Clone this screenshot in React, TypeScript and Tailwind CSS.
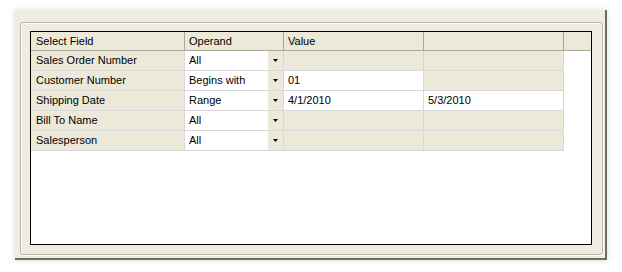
type Row = {
  field: string;
  operand: string;
  value?: string;
  value2?: string;
  valueOn: boolean;
  value2On: boolean;
};

const rows: Row[] = [
  { field: 'Sales Order Number', operand: 'All', valueOn: false, value2On: false },
  { field: 'Customer Number', operand: 'Begins with', value: '01', valueOn: true, value2On: false },
  { field: 'Shipping Date', operand: 'Range', value: '4/1/2010', value2: '5/3/2010', valueOn: true, value2On: true },
  { field: 'Bill To Name', operand: 'All', valueOn: false, value2On: false },
  { field: 'Salesperson', operand: 'All', valueOn: false, value2On: false },
];

function DropArrow() {
  return (
    <svg width="5" height="3" viewBox="0 0 5 3">
      <path d="M0 0h5L2.5 3z" fill="#000" />
    </svg>
  );
}

export default function App() {
  return (
    <div className="w-[622px] h-[272px] bg-white pt-[10px] pl-[15px]" style={{ fontFamily: '"Liberation Sans", Arial, sans-serif' }}>
      <div className="w-[592px] h-[250px] bg-[#efece1] border-r-2 border-b-2 border-[#6f6d66] shadow-[0_0_6px_rgba(120,110,80,0.25)] pt-[12px] pl-[5px]">
        <div className="w-[583px] h-[233px] rounded-[3px] border border-[#b8b5a6] shadow-[inset_1px_1px_0_#fff,1px_1px_0_#fff] pt-[8px] pl-[9px]">
          <div className="w-[562px] h-[214px] bg-white border border-black text-[11px] text-black">
            {/* header */}
            <div className="flex h-[19px] bg-[#ece9d8] border-b border-[#aca899]">
              <div className="w-[154px] pl-[5px] flex items-center border-r border-[#aca899]">Select Field</div>
              <div className="w-[99px] pl-[4px] flex items-center border-r border-[#aca899]">Operand</div>
              <div className="w-[140px] pl-[4px] flex items-center border-r border-[#aca899]">Value</div>
              <div className="w-[140px] border-r border-[#aca899]" />
              <div className="flex-1" />
            </div>
            {rows.map((r) => (
              <div key={r.field} className="flex h-[20px]">
                <div className="w-[154px] pl-[5px] flex items-center bg-[#ece9d8] border-r border-b border-[#d8d8dc]">{r.field}</div>
                <div className="w-[99px] flex border-r border-b border-[#d8d8dc]">
                  <div className="flex-1 pl-[4px] flex items-center bg-white">{r.operand}</div>
                  <div className="w-[16px] flex items-center justify-center bg-[#ece9d8] border-l border-white">
                    <DropArrow />
                  </div>
                </div>
                <div className={`w-[140px] pl-[4px] flex items-center border-r border-b border-[#d8d8dc] ${r.valueOn ? 'bg-white' : 'bg-[#ece9d8]'}`}>{r.value}</div>
                <div className={`w-[140px] pl-[4px] flex items-center border-r border-b border-[#d8d8dc] ${r.value2On ? 'bg-white' : 'bg-[#ece9d8]'}`}>{r.value2}</div>
                <div className="flex-1" />
              </div>
            ))}
          </div>
        </div>
      </div>
    </div>
  );
}
